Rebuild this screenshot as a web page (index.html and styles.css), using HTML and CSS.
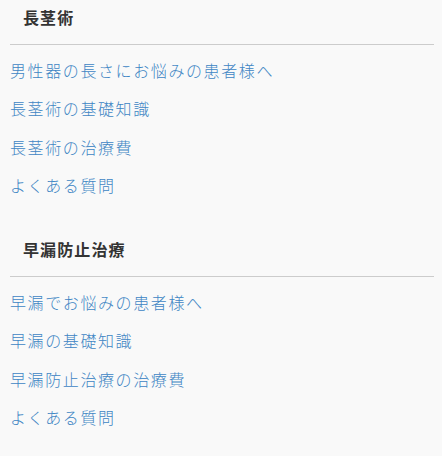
FILE: index.html
```html
<!DOCTYPE html>
<html lang="ja">
<head>
  <meta charset="UTF-8">
  <meta name="viewport" content="width=device-width, initial-scale=1.0">
  <title>メニュー</title>
  <link rel="stylesheet" href="styles.css">
</head>
<body>
  <nav class="side-menu">
    <!-- 長茎術 -->
    <section class="menu-group">
      <h3 class="menu-title">長茎術</h3>
      <ul class="menu-list">
        <li><a href="#">男性器の長さにお悩みの患者様へ</a></li>
        <li><a href="#">長茎術の基礎知識</a></li>
        <li><a href="#">長茎術の治療費</a></li>
        <li><a href="#">よくある質問</a></li>
      </ul>
    </section>

    <!-- 早漏防止治療 -->
    <section class="menu-group">
      <h3 class="menu-title">早漏防止治療</h3>
      <ul class="menu-list">
        <li><a href="#">早漏でお悩みの患者様へ</a></li>
        <li><a href="#">早漏の基礎知識</a></li>
        <li><a href="#">早漏防止治療の治療費</a></li>
        <li><a href="#">よくある質問</a></li>
      </ul>
    </section>
  </nav>
</body>
</html>
```

FILE: styles.css
```css
body {
  font-family: "Noto Sans CJK JP", "Noto Sans", sans-serif;
  background-color: #f9f9f9;
  color: #333;
  margin: 0;
  padding: 0;
}

.side-menu {
  padding: 0 8px 0 10px;
}

.menu-group {
  margin-bottom: 28px;
}

.menu-title {
  margin: 0;
  padding: 5px 0 15px 13px;
  font-size: 16px;
  line-height: 24px;
  font-weight: bold;
  letter-spacing: 0.07em;
  color: #333;
  border-bottom: 1px solid #cccccc;
}

.menu-list {
  list-style: none;
  margin: 0;
  padding: 6px 0 0;
}

.menu-list li {
  padding: 7px 0;
  line-height: 24.3px;
}

.menu-list a {
  color: #3f86c4;
  font-size: 16px;
  font-weight: 300;
  letter-spacing: 0.1em;
  text-decoration: none;
}

.menu-list a:hover {
  text-decoration: underline;
}
```
